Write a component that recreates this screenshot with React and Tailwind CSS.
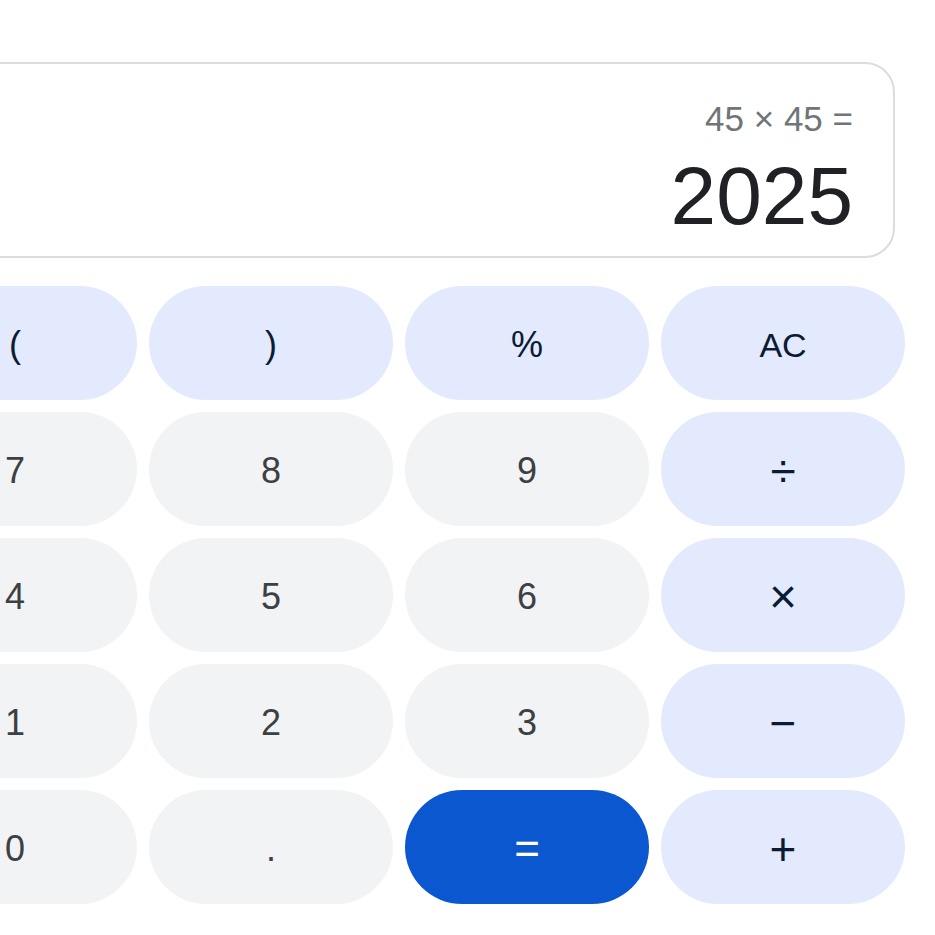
import React from 'react';

const keys = [
  { label: '(', kind: 'op' },
  { label: ')', kind: 'op' },
  { label: '%', kind: 'op' },
  { label: 'AC', kind: 'op', size: 'text-[34px]' },
  { label: '7', kind: 'num' },
  { label: '8', kind: 'num' },
  { label: '9', kind: 'num' },
  { label: '÷', kind: 'op', size: 'text-[46px]' },
  { label: '4', kind: 'num' },
  { label: '5', kind: 'num' },
  { label: '6', kind: 'num' },
  { label: '×', kind: 'op', size: 'text-[48px]' },
  { label: '1', kind: 'num' },
  { label: '2', kind: 'num' },
  { label: '3', kind: 'num' },
  { label: '−', kind: 'op', size: 'text-[46px]' },
  { label: '0', kind: 'num' },
  { label: '.', kind: 'num' },
  { label: '=', kind: 'eq', size: 'text-[44px]' },
  { label: '+', kind: 'op', size: 'text-[46px]' },
];

const styles = {
  num: 'bg-[#f1f3f4] text-[#3c4043]',
  op: 'bg-[#e3eafd] text-[#0b1b33]',
  eq: 'bg-[#0b57d0] text-white',
};

export default function App() {
  return (
    <div className="min-h-[935px] w-[935px] overflow-hidden bg-white pt-[62px] font-['Liberation_Sans',Arial,sans-serif]">
      <div className="ml-[-107px] w-[1012px]">
        {/* display */}
        <div className="mr-[10px] h-[196px] rounded-[30px] border-2 border-[#dadce0] pr-[40px] flex flex-col items-end">
          <div className="mt-[35px] text-[35px] leading-[40px] text-[#70757a]">45 × 45 =</div>
          <div className="mt-[10px] text-[82px] leading-[94px] text-[#202124]">2025</div>
        </div>

        {/* keypad */}
        <div className="mt-[28px] grid grid-cols-4 gap-[12px]">
          {keys.map((k) => (
            <button
              key={k.label}
              className={`h-[114px] rounded-full flex items-center justify-center leading-none pt-[4px] ${k.size || 'text-[36px]'} ${styles[k.kind]}`}
            >
              {k.label}
            </button>
          ))}
        </div>
      </div>
    </div>
  );
}
